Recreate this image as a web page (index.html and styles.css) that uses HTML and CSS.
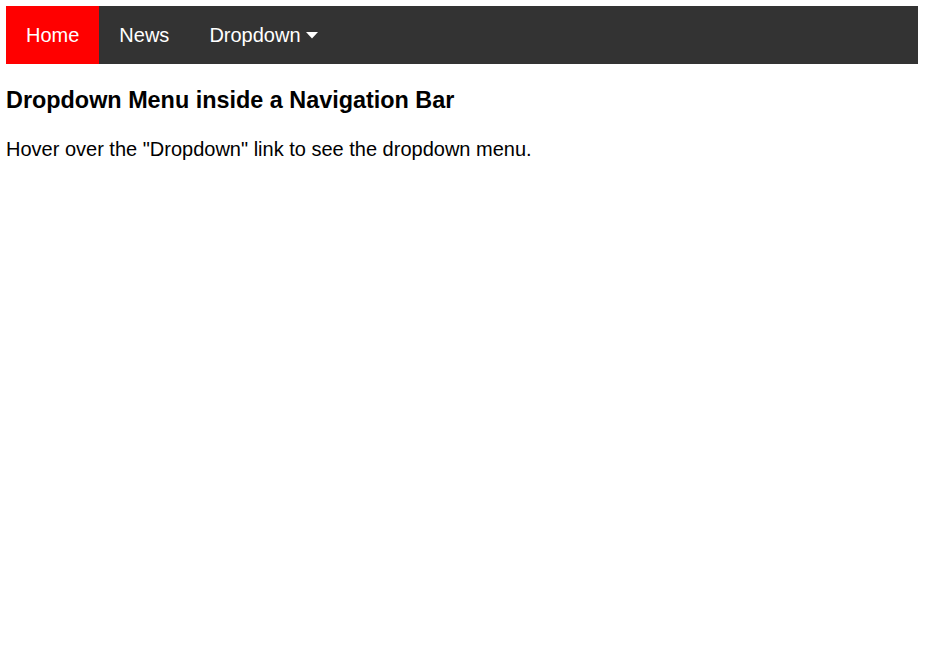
FILE: index.html
```html
<!DOCTYPE html>
<html>
<head>
<meta charset="utf-8">
<link rel="stylesheet" href="styles.css">
</head>
<body>
<div class="navbar">
  <a class="nav-link active" href="#home">Home</a>
  <a class="nav-link" href="#news">News</a>
  <div class="dropdown">
    <button class="dropbtn">Dropdown <svg class="caret" viewBox="0 0 12 7" width="12" height="7"><path d="M0 0h12L6 6.5z" fill="#fff"/></svg></button>
  </div>
</div>
<h3 class="title">Dropdown Menu inside a Navigation Bar</h3>
<p class="text">Hover over the "Dropdown" link to see the dropdown menu.</p>
</body>
</html>
```
FILE: styles.css
```css
body {
  margin: 6px;
  font-family: "Liberation Sans", Arial, sans-serif;
  font-size: 20px;
  color: #000;
  background: #fff;
}
.navbar {
  display: flex;
  background: #333;
  width: 912px;
}
.nav-link, .dropbtn {
  display: flex;
  align-items: center;
  color: #fff;
  text-decoration: none;
  font-family: inherit;
  font-size: 20px;
  line-height: 23px;
  padding: 18px 20px 17px;
  border: none;
  background: transparent;
  margin: 0;
}
.nav-link.active {
  background: #f00;
}
.caret {
  margin-left: 5px;
  margin-top: -1px;
}
.title {
  font-size: 1.17em;
  margin: 1em 0;
}
.text {
  margin: 1em 0;
}
```
